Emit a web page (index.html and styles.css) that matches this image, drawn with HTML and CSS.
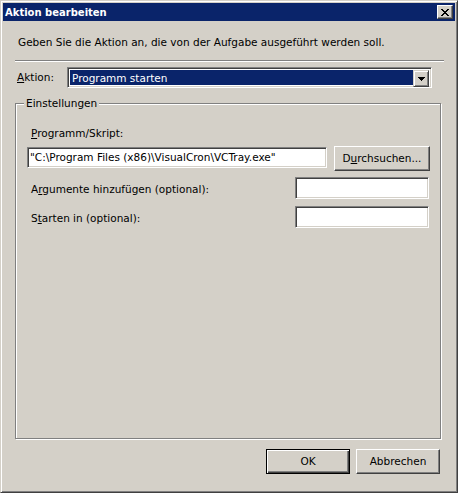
FILE: index.html
```html
<!DOCTYPE html>
<html lang="de">
<head>
<meta charset="utf-8">
<title>Aktion bearbeiten</title>
<link rel="stylesheet" href="styles.css">
</head>
<body>
<div class="window">
  <div class="titlebar">
    <span class="title">Aktion bearbeiten</span>
    <div class="close">
      <svg width="8" height="7" viewBox="0 0 8 7" shape-rendering="crispEdges"><path d="M0 0h2v1H0zM6 0h2v1H6zM1 1h2v1H1zM5 1h2v1H5zM2 2h4v1H2zM3 3h2v1H3zM2 4h4v1H2zM1 5h2v1H1zM5 5h2v1H5zM0 6h2v1H0zM6 6h2v1H6z" fill="#000"/></svg>
    </div>
  </div>
  <div class="client">
    <p class="intro">Geben Sie die Aktion an, die von der Aufgabe ausgeführt werden soll.</p>
    <div class="sep"></div>
    <div class="action-row">
      <span class="action-label"><u>A</u>ktion:</span>
      <div class="combo">
        <div class="combo-value">Programm starten</div>
        <div class="combo-btn">
          <svg width="7" height="4" viewBox="0 0 7 4" shape-rendering="crispEdges"><path d="M0 0h7v1H0zM1 1h5v1H1zM2 2h3v1H2zM3 3h1v1H3z" fill="#000"/></svg>
        </div>
      </div>
    </div>
    <div class="group">
      <span class="legend">Einstellungen</span>
      <span class="field-label"><u>P</u>rogramm/Skript:</span>
      <div class="prog-row">
        <div class="textbox prog">"C:\Program Files (x86)\VisualCron\VCTray.exe"</div>
        <div class="btn browse">D<u>u</u>rchsuchen...</div>
      </div>
      <div class="opt-row first">
        <span class="opt-label">A<u>r</u>gumente hinzufügen (optional):</span>
        <div class="textbox small"></div>
      </div>
      <div class="opt-row">
        <span class="opt-label">S<u>t</u>arten in (optional):</span>
        <div class="textbox small"></div>
      </div>
    </div>
    <div class="buttons">
      <div class="btn dlg default">OK</div>
      <div class="btn dlg">Abbrechen</div>
    </div>
  </div>
</div>
</body>
</html>
```
FILE: styles.css
```css
* { box-sizing: border-box; }
html, body { margin: 0; padding: 0; }
body {
  width: 458px;
  height: 493px;
  background: #D4D0C8;
  font-family: "DejaVu Sans", "Liberation Sans", sans-serif;
  font-size: 10.5px;
  color: #000;
  overflow: hidden;
}
u { text-decoration: underline; text-underline-offset: 1px; }
.window {
  width: 458px;
  height: 493px;
  border: 1px solid;
  border-color: #D4D0C8 #404040 #404040 #D4D0C8;
  box-shadow: inset 1px 1px #fff, inset -1px -1px #808080;
  padding: 2px;
  display: flex;
  flex-direction: column;
  background: #D4D0C8;
}
.titlebar {
  height: 18px;
  flex: none;
  background: #0A246A;
  display: flex;
  align-items: center;
  justify-content: space-between;
  padding: 0 2px;
}
.title {
  color: #fff;
  font-weight: bold;
  font-size: 10px;
  line-height: 13px;
}
.close {
  width: 16px;
  height: 14px;
  background: #D4D0C8;
  border: 1px solid;
  border-color: #fff #404040 #404040 #fff;
  box-shadow: inset -1px -1px #808080;
  display: flex;
  align-items: center;
  justify-content: center;
  padding-right: 1px;
}
.close svg { display: block; }
.client {
  flex: 1;
  display: flex;
  flex-direction: column;
}
.intro {
  margin: 15px 0 0 15px;
  line-height: 13px;
}
.sep {
  margin: 11px 0 0 12px;
  width: 429px;
  height: 2px;
  border-top: 1px solid #808080;
  border-bottom: 1px solid #fff;
}
.action-row {
  margin-top: 5px;
  display: flex;
  align-items: center;
}
.action-label {
  margin-left: 14px;
  width: 50px;
  line-height: 13px;
}
.combo {
  width: 365px;
  height: 21px;
  border: 1px solid;
  border-color: #808080 #fff #fff #808080;
  box-shadow: inset 1px 1px #404040, inset -1px -1px #D4D0C8;
  background: #fff;
  padding: 2px;
  display: flex;
}
.combo-value {
  flex: 1;
  background: #0A246A;
  color: #fff;
  line-height: 17px;
  padding-left: 2px;
}
.combo-btn {
  width: 16px;
  height: 17px;
  background: #D4D0C8;
  border: 1px solid;
  border-color: #D4D0C8 #404040 #404040 #D4D0C8;
  box-shadow: inset 1px 1px #fff, inset -1px -1px #808080;
  display: flex;
  align-items: center;
  justify-content: center;
}
.combo-btn svg { display: block; }
.group {
  margin: 15px 0 0 12px;
  width: 426px;
  height: 336px;
  flex: none;
  border: 1px solid #808080;
  box-shadow: inset 1px 1px #fff, 1px 1px #fff;
  display: flex;
  flex-direction: column;
  align-items: flex-start;
}
.legend {
  margin: -7px 0 0 8px;
  padding: 0 2px;
  background: #D4D0C8;
  line-height: 13px;
}
.field-label {
  margin: 17px 0 0 15px;
  line-height: 13px;
}
.prog-row {
  margin: 6px 0 0 11px;
  display: flex;
  align-items: flex-start;
}
.textbox {
  background: #fff;
  border: 1px solid;
  border-color: #808080 #fff #fff #808080;
  box-shadow: inset 1px 1px #404040, inset -1px -1px #D4D0C8;
  white-space: nowrap;
  overflow: hidden;
}
.textbox.prog {
  width: 300px;
  height: 21px;
  margin-top: 1px;
  padding: 0 2px;
  line-height: 19px;
}
.btn {
  background: #D4D0C8;
  border: 1px solid;
  border-color: #fff #404040 #404040 #fff;
  box-shadow: inset -1px -1px #808080;
  display: flex;
  align-items: center;
  justify-content: center;
  line-height: 13px;
}
.btn.browse {
  margin-left: 7px;
  width: 96px;
  height: 25px;
}
.opt-row {
  align-self: stretch;
  margin: 7px 11px 0 15px;
  display: flex;
  align-items: center;
}
.opt-row.first { margin-top: 6px; }
.opt-label {
  flex: 1;
  line-height: 13px;
  padding-top: 3px;
}
.textbox.small {
  width: 134px;
  height: 22px;
}
.buttons {
  margin: 10px 15px 0 0;
  display: flex;
  justify-content: flex-end;
  gap: 6px;
}
.btn.dlg {
  width: 84px;
  height: 25px;
}
.btn.default {
  border: 1px solid #000;
  box-shadow: inset 1px 1px #fff, inset -1px -1px #404040, inset -2px -2px #808080;
}
```
